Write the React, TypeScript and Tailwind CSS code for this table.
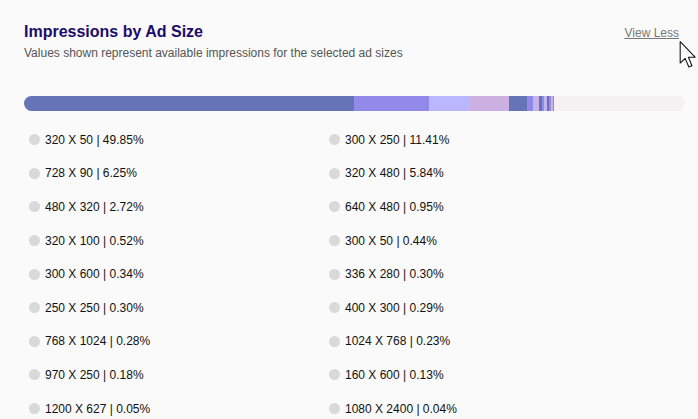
import React from 'react'

type AdSize = {
  label: string
  share: number
}

const sizes: AdSize[] = [
  { label: '320 X 50', share: 49.85 },
  { label: '300 X 250', share: 11.41 },
  { label: '728 X 90', share: 6.25 },
  { label: '320 X 480', share: 5.84 },
  { label: '480 X 320', share: 2.72 },
  { label: '640 X 480', share: 0.95 },
  { label: '320 X 100', share: 0.52 },
  { label: '300 X 50', share: 0.44 },
  { label: '300 X 600', share: 0.34 },
  { label: '336 X 280', share: 0.3 },
  { label: '250 X 250', share: 0.3 },
  { label: '400 X 300', share: 0.29 },
  { label: '768 X 1024', share: 0.28 },
  { label: '1024 X 768', share: 0.23 },
  { label: '970 X 250', share: 0.18 },
  { label: '160 X 600', share: 0.13 },
  { label: '1200 X 627', share: 0.05 },
  { label: '1080 X 2400', share: 0.04 },
]

const barColors = ['bg-[#6574b7]', 'bg-[#9389e8]', 'bg-[#bbb7fe]', 'bg-[#cdb0e2]']

function Cursor() {
  return (
    <svg
      className="absolute left-[679px] top-[41px]"
      width="18"
      height="27"
      viewBox="0 0 12 19"
    >
      <path
        d="M0.5 0.5 L0.5 15.5 L4 12.2 L6.6 18.3 L8.8 17.4 L6.3 11.4 L11 11.4 Z"
        fill="#fff"
        stroke="#111"
        strokeWidth="0.75"
        strokeLinejoin="round"
      />
    </svg>
  )
}

export default function App() {
  return (
    <div className="relative h-[419px] w-full overflow-hidden bg-[#fafafa] pl-6 pr-[13px] pt-[22px] font-['Liberation_Sans',Arial,sans-serif]">
      <div className="flex items-start justify-between pr-[6px]">
        <div>
          <h2 className="text-[16px] font-bold leading-[20px] text-[#1c0b6b]">
            Impressions by Ad Size
          </h2>
          <p className="mt-[3px] text-[12px] leading-[16px] text-[#555]">
            Values shown represent available impressions for the selected ad sizes
          </p>
        </div>
        <a className="mt-[3px] text-[12px] leading-[16px] text-[#777] underline">
          View Less
        </a>
      </div>

      <div className="mt-[35px] flex h-[15px] w-full overflow-hidden rounded-full bg-[#f4f1f3]">
        {sizes.map((s, i) => (
          <div
            key={s.label}
            className={`h-full shrink-0 ${barColors[i % 4]}`}
            style={{ width: `${s.share}%` }}
          />
        ))}
      </div>

      <ul className="mt-[12px] grid grid-cols-[300px_300px] auto-rows-[33.6px] pl-[5px]">
        {sizes.map((s) => (
          <li key={s.label} className="flex items-center gap-[5px] text-[12px] text-[#111]">
            <span className="h-[11px] w-[11px] rounded-full bg-[#d9d9d9]" />
            <span>
              {s.label} | {s.share.toFixed(2)}%
            </span>
          </li>
        ))}
      </ul>

      <Cursor />
    </div>
  )
}
